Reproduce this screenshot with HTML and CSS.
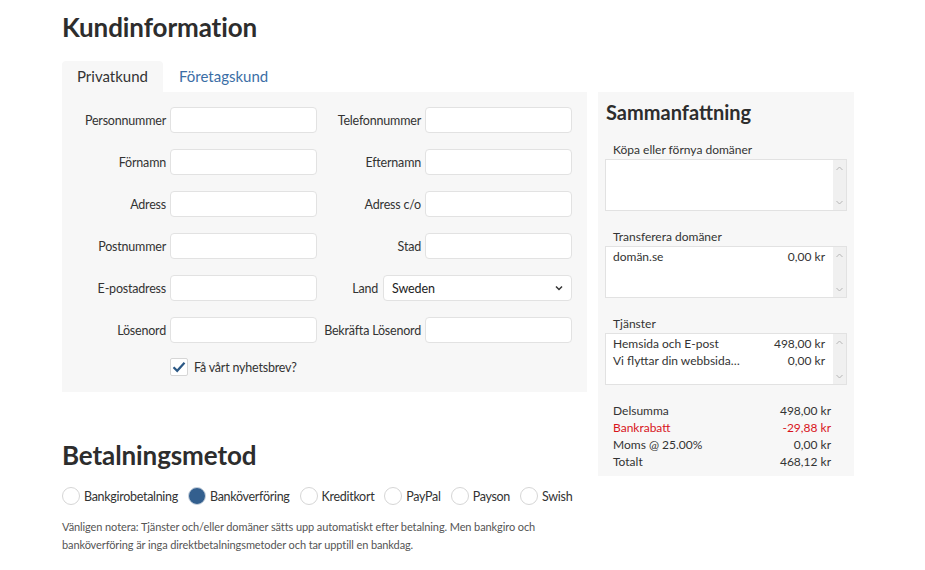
FILE: index.html
```html
<!DOCTYPE html>
<html lang="sv">
<head>
<meta charset="utf-8">
<title>Kundinformation</title>
<link rel="stylesheet" href="styles.css">
</head>
<body>
<div class="page">
  <h1 class="title">Kundinformation</h1>
  <div class="layout">
    <div class="main">
      <div class="tabs">
        <div class="tab active">Privatkund</div>
        <div class="tab">Företagskund</div>
      </div>
      <div class="panel">
        <div class="form-grid">
          <label class="lbl">Personnummer</label><input class="field" type="text">
          <label class="lbl">Telefonnummer</label><input class="field" type="text">
          <label class="lbl">Förnamn</label><input class="field" type="text">
          <label class="lbl">Efternamn</label><input class="field" type="text">
          <label class="lbl">Adress</label><input class="field" type="text">
          <label class="lbl">Adress c/o</label><input class="field" type="text">
          <label class="lbl">Postnummer</label><input class="field" type="text">
          <label class="lbl">Stad</label><input class="field" type="text">
          <label class="lbl">E-postadress</label><input class="field" type="text">
          <div class="land-cell">
            <label class="lbl">Land</label>
            <div class="select">
              <span>Sweden</span>
              <svg class="caret" width="8" height="6" viewBox="0 0 8 6"><path d="M1 1.5 L4 4.5 L7 1.5" fill="none" stroke="#333" stroke-width="1.5"/></svg>
            </div>
          </div>
          <label class="lbl">Lösenord</label><input class="field" type="password">
          <label class="lbl">Bekräfta Lösenord</label><input class="field" type="password">
          <div class="check-cell">
            <span class="checkbox"><svg width="14" height="12" viewBox="0 0 14 12"><path d="M1.5 6.2 L5.2 9.8 L12.5 1.8" fill="none" stroke="#2b5885" stroke-width="2.2"/></svg></span>
            <span class="check-text">Få vårt nyhetsbrev?</span>
          </div>
        </div>
      </div>

      <h1 class="title pay-title">Betalningsmetod</h1>
      <div class="radios">
        <div class="radio-item"><span class="radio"></span>Bankgirobetalning</div>
        <div class="radio-item"><span class="radio checked"></span>Banköverföring</div>
        <div class="radio-item"><span class="radio"></span>Kreditkort</div>
        <div class="radio-item"><span class="radio"></span>PayPal</div>
        <div class="radio-item"><span class="radio"></span>Payson</div>
        <div class="radio-item"><span class="radio"></span>Swish</div>
      </div>
      <p class="note">Vänligen notera: Tjänster och/eller domäner sätts upp automatiskt efter betalning. Men bankgiro och banköverföring är inga direktbetalningsmetoder och tar upptill en bankdag.</p>
    </div>

    <aside class="summary">
      <h2 class="sum-title">Sammanfattning</h2>
      <div class="sum-section">
        <div class="sum-label">Köpa eller förnya domäner</div>
        <div class="listbox">
          <div class="list-rows"></div>
          <div class="scrollbar">
            <svg width="7" height="5" viewBox="0 0 7 5"><path d="M0.5 4 L3.5 1 L6.5 4" fill="none" stroke="#b5b5b5" stroke-width="1"/></svg>
            <svg width="7" height="5" viewBox="0 0 7 5"><path d="M0.5 1 L3.5 4 L6.5 1" fill="none" stroke="#b5b5b5" stroke-width="1"/></svg>
          </div>
        </div>
      </div>
      <div class="sum-section">
        <div class="sum-label">Transferera domäner</div>
        <div class="listbox">
          <div class="list-rows">
            <div class="list-row"><span>domän.se</span><span>0,00 kr</span></div>
          </div>
          <div class="scrollbar">
            <svg width="7" height="5" viewBox="0 0 7 5"><path d="M0.5 4 L3.5 1 L6.5 4" fill="none" stroke="#b5b5b5" stroke-width="1"/></svg>
            <svg width="7" height="5" viewBox="0 0 7 5"><path d="M0.5 1 L3.5 4 L6.5 1" fill="none" stroke="#b5b5b5" stroke-width="1"/></svg>
          </div>
        </div>
      </div>
      <div class="sum-section">
        <div class="sum-label">Tjänster</div>
        <div class="listbox">
          <div class="list-rows">
            <div class="list-row"><span>Hemsida och E-post</span><span>498,00 kr</span></div>
            <div class="list-row"><span>Vi flyttar din webbsida…</span><span>0,00 kr</span></div>
          </div>
          <div class="scrollbar">
            <svg width="7" height="5" viewBox="0 0 7 5"><path d="M0.5 4 L3.5 1 L6.5 4" fill="none" stroke="#b5b5b5" stroke-width="1"/></svg>
            <svg width="7" height="5" viewBox="0 0 7 5"><path d="M0.5 1 L3.5 4 L6.5 1" fill="none" stroke="#b5b5b5" stroke-width="1"/></svg>
          </div>
        </div>
      </div>
      <div class="totals">
        <div class="total-row"><span>Delsumma</span><span>498,00 kr</span></div>
        <div class="total-row discount"><span>Bankrabatt</span><span>-29,88 kr</span></div>
        <div class="total-row"><span>Moms @ 25.00%</span><span>0,00 kr</span></div>
        <div class="total-row"><span>Totalt</span><span>468,12 kr</span></div>
      </div>
    </aside>
  </div>
</div>
</body>
</html>
```

FILE: styles.css
```css
* { box-sizing: border-box; }
html, body { margin: 0; padding: 0; background: #fff; }
body {
  font-family: "Lato", "Liberation Sans", sans-serif;
  color: #333;
  font-size: 13px;
}
.page { padding-left: 62px; }
.title {
  margin: 12px 0 0;
  font-size: 26px;
  line-height: 31px;
  font-weight: 700;
  color: #2d2d2d;
  letter-spacing: -0.1px;
}
.layout {
  display: flex;
  align-items: flex-start;
  gap: 11px;
  margin-top: 18px;
}
.main { width: 525px; }

.tabs { display: flex; gap: 1px; height: 31px; }
.tab {
  padding: 0 15px;
  font-size: 15px;
  line-height: 31px;
  color: #3b6ea6;
}
.tab.active {
  background: #f7f7f7;
  color: #333;
  border-radius: 4px 4px 0 0;
}

.panel {
  background: #f7f7f7;
  padding: 15px 15px 16px 0;
}
.form-grid {
  display: grid;
  grid-template-columns: 104px 147px 100px 147px;
  column-gap: 4px;
  row-gap: 16px;
  align-items: center;
}
.lbl {
  text-align: right;
  font-size: 12.5px;
  letter-spacing: -0.2px;
  color: #333;
  white-space: nowrap;
}
.field {
  height: 26px;
  width: 100%;
  border: 1px solid #e2e2e2;
  border-radius: 4px;
  background: #fff;
  font: inherit;
  padding: 0 8px;
  outline: none;
}
.land-cell {
  grid-column: 3 / 5;
  display: flex;
  justify-content: flex-end;
  align-items: center;
  gap: 5px;
}
.select {
  width: 189px;
  height: 26px;
  border: 1px solid #e2e2e2;
  border-radius: 4px;
  background: #fff;
  display: flex;
  align-items: center;
  justify-content: space-between;
  padding: 0 8px 0 8px;
  font-size: 12.5px;
  letter-spacing: -0.1px;
  color: #222;
}
.check-cell {
  grid-column: 2 / 5;
  display: flex;
  align-items: center;
  gap: 6px;
  margin-top: -1px;
}
.checkbox {
  width: 18px;
  height: 18px;
  border: 1px solid #d6d6d6;
  border-radius: 2px;
  background: #fff;
  display: flex;
  align-items: center;
  justify-content: center;
}
.check-text { font-size: 12.5px; letter-spacing: -0.2px; }

.pay-title { margin-top: 48px; }
.radios {
  display: flex;
  align-items: center;
  margin-top: 16px;
  gap: 10px;
}
.radio-item {
  display: flex;
  align-items: center;
  gap: 4px;
  font-size: 12.5px;
  letter-spacing: -0.3px;
  color: #333;
}
.radio {
  width: 18px;
  height: 18px;
  border-radius: 50%;
  border: 1px solid #d6d6d6;
  background: #fff;
}
.radio.checked {
  background: #335f8e;
  border-color: #c9d3de;
}
.note {
  margin: 13px 0 0;
  font-size: 11px;
  letter-spacing: -0.1px;
  line-height: 18px;
  color: #555;
}

.summary {
  width: 256px;
  margin-top: 31px;
  background: #f7f7f7;
  padding: 7px 7px 6px 7px;
}
.sum-title {
  margin: 0 0 0 1px;
  font-size: 20px;
  line-height: 26px;
  font-weight: 700;
  color: #2d2d2d;
}
.sum-section { margin-top: 16px; }
.sum-section + .sum-section { margin-top: 17px; }
.sum-label {
  font-size: 12px;
  line-height: 17px;
  padding-left: 8px;
  margin-bottom: 1px;
  color: #333;
}
.listbox {
  height: 52px;
  background: #fff;
  border: 1px solid #e2e2e2;
  display: flex;
}
.list-rows {
  flex: 1;
  padding: 1px 8px 0 7px;
}
.list-row {
  display: flex;
  justify-content: space-between;
  font-size: 12px;
  line-height: 17px;
  color: #333;
}
.scrollbar {
  width: 13px;
  background: #f0f0f0;
  display: flex;
  flex-direction: column;
  justify-content: space-between;
  align-items: center;
  padding: 6px 0 5px;
}
.totals {
  margin-top: 17px;
  padding: 0 16px 0 8px;
}
.total-row {
  display: flex;
  justify-content: space-between;
  font-size: 12px;
  line-height: 17px;
  color: #333;
}
.total-row.discount { color: #d8141c; }
```
